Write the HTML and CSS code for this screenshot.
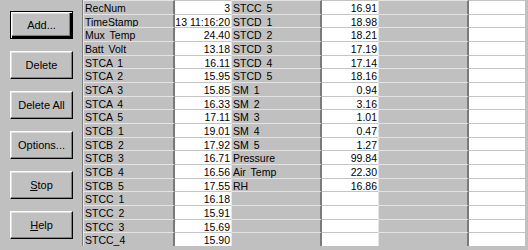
FILE: index.html
```html
<!DOCTYPE html>
<html lang="en">
<head>
    <meta charset="UTF-8">
    <title>Data Grid</title>
    <link rel="stylesheet" href="styles.css">
</head>
<body>
    <div id="window">
        <div id="toolbar">
            <button class="btn default">Add...</button>
            <button class="btn">Delete</button>
            <button class="btn">Delete All</button>
            <button class="btn">Options...</button>
            <button class="btn"><u>S</u>top</button>
            <button class="btn"><u>H</u>elp</button>
        </div>
        <div id="grid"></div>
    </div>

    <script>
        const grid = document.getElementById('grid');

        const ROWS = 18;
        const columns = [
            [
                ['RecNum', '3'], ['TimeStamp', '13 11:16:20'], ['Mux Temp', '24.40'],
                ['Batt Volt', '13.18'], ['STCA 1', '16.11'], ['STCA 2', '15.95'],
                ['STCA 3', '15.85'], ['STCA 4', '16.33'], ['STCA 5', '17.11'],
                ['STCB 1', '19.01'], ['STCB 2', '17.92'], ['STCB 3', '16.71'],
                ['STCB 4', '16.56'], ['STCB 5', '17.55'], ['STCC 1', '16.18'],
                ['STCC 2', '15.91'], ['STCC 3', '15.69'], ['STCC_4', '15.90']
            ],
            [
                ['STCC 5', '16.91'], ['STCD 1', '18.98'], ['STCD 2', '18.21'],
                ['STCD 3', '17.19'], ['STCD 4', '17.14'], ['STCD 5', '18.16'],
                ['SM 1', '0.94'], ['SM 2', '3.16'], ['SM 3', '1.01'],
                ['SM 4', '0.47'], ['SM 5', '1.27'], ['Pressure', '99.84'],
                ['Air Temp', '22.30'], ['RH', '16.86']
            ],
            []
        ];

        // una fila a la vez: etiqueta + valor por cada grupo
        for (let r = 0; r < ROWS; r++) {
            for (let group of columns) {
                const item = group[r] || ['', ''];
                const label = document.createElement('div');
                label.className = 'cell label';
                label.textContent = item[0];
                const value = document.createElement('div');
                value.className = 'cell value';
                value.textContent = item[1];
                grid.appendChild(label);
                grid.appendChild(value);
            }
        }
    </script>
</body>
</html>
```

FILE: styles.css
```css
* {
    margin: 0;
    padding: 0;
    box-sizing: border-box;
}

body {
    width: 528px;
    height: 250px;
    background: #c0c0c0;
    font-family: 'Liberation Sans', Arial, sans-serif;
    font-size: 10.5px;
    color: #000;
    overflow: hidden;
}

#window {
    display: flex;
    height: 250px;
    padding-right: 3px;
}

#toolbar {
    width: 83px;
    display: flex;
    flex-direction: column;
    gap: 12px;
    padding: 11px 0 0 10px;
}

.btn {
    width: 63px;
    height: 28px;
    background: #c0c0c0;
    font-family: 'Liberation Sans', Arial, sans-serif;
    font-size: 11px;
    color: #000;
    border: 1px solid;
    border-color: #fff #000 #000 #fff;
    box-shadow: inset -1px -1px #808080, inset 1px 1px #dfdfdf;
}

.btn.default {
    border: 1px solid #000;
    box-shadow: inset 1px 1px #fff, inset -2px -2px #000, inset -3px -3px #808080, inset 2px 2px #dfdfdf;
}

.btn u {
    text-decoration: underline;
}

#grid {
    display: grid;
    grid-template-columns: 92px 56px 91px 56px 91px 56px;
    grid-template-rows: repeat(18, 1fr);
    height: 246px;
    border-left: 1px solid #808080;
}

.cell {
    white-space: pre;
    overflow: hidden;
    line-height: 12px;
    padding-top: 1px;
}

.label {
    background: #c0c0c0;
    border-top: 1px solid #e4e4e4;
    border-left: 1px solid #e4e4e4;
    border-right: 2px solid #7a7a7a;
    padding-left: 1px;
    word-spacing: 2px;
}

.value {
    background: #fff;
    border-top: 1px solid #c4c4c4;
    text-align: right;
    padding-right: 1px;
}
```
